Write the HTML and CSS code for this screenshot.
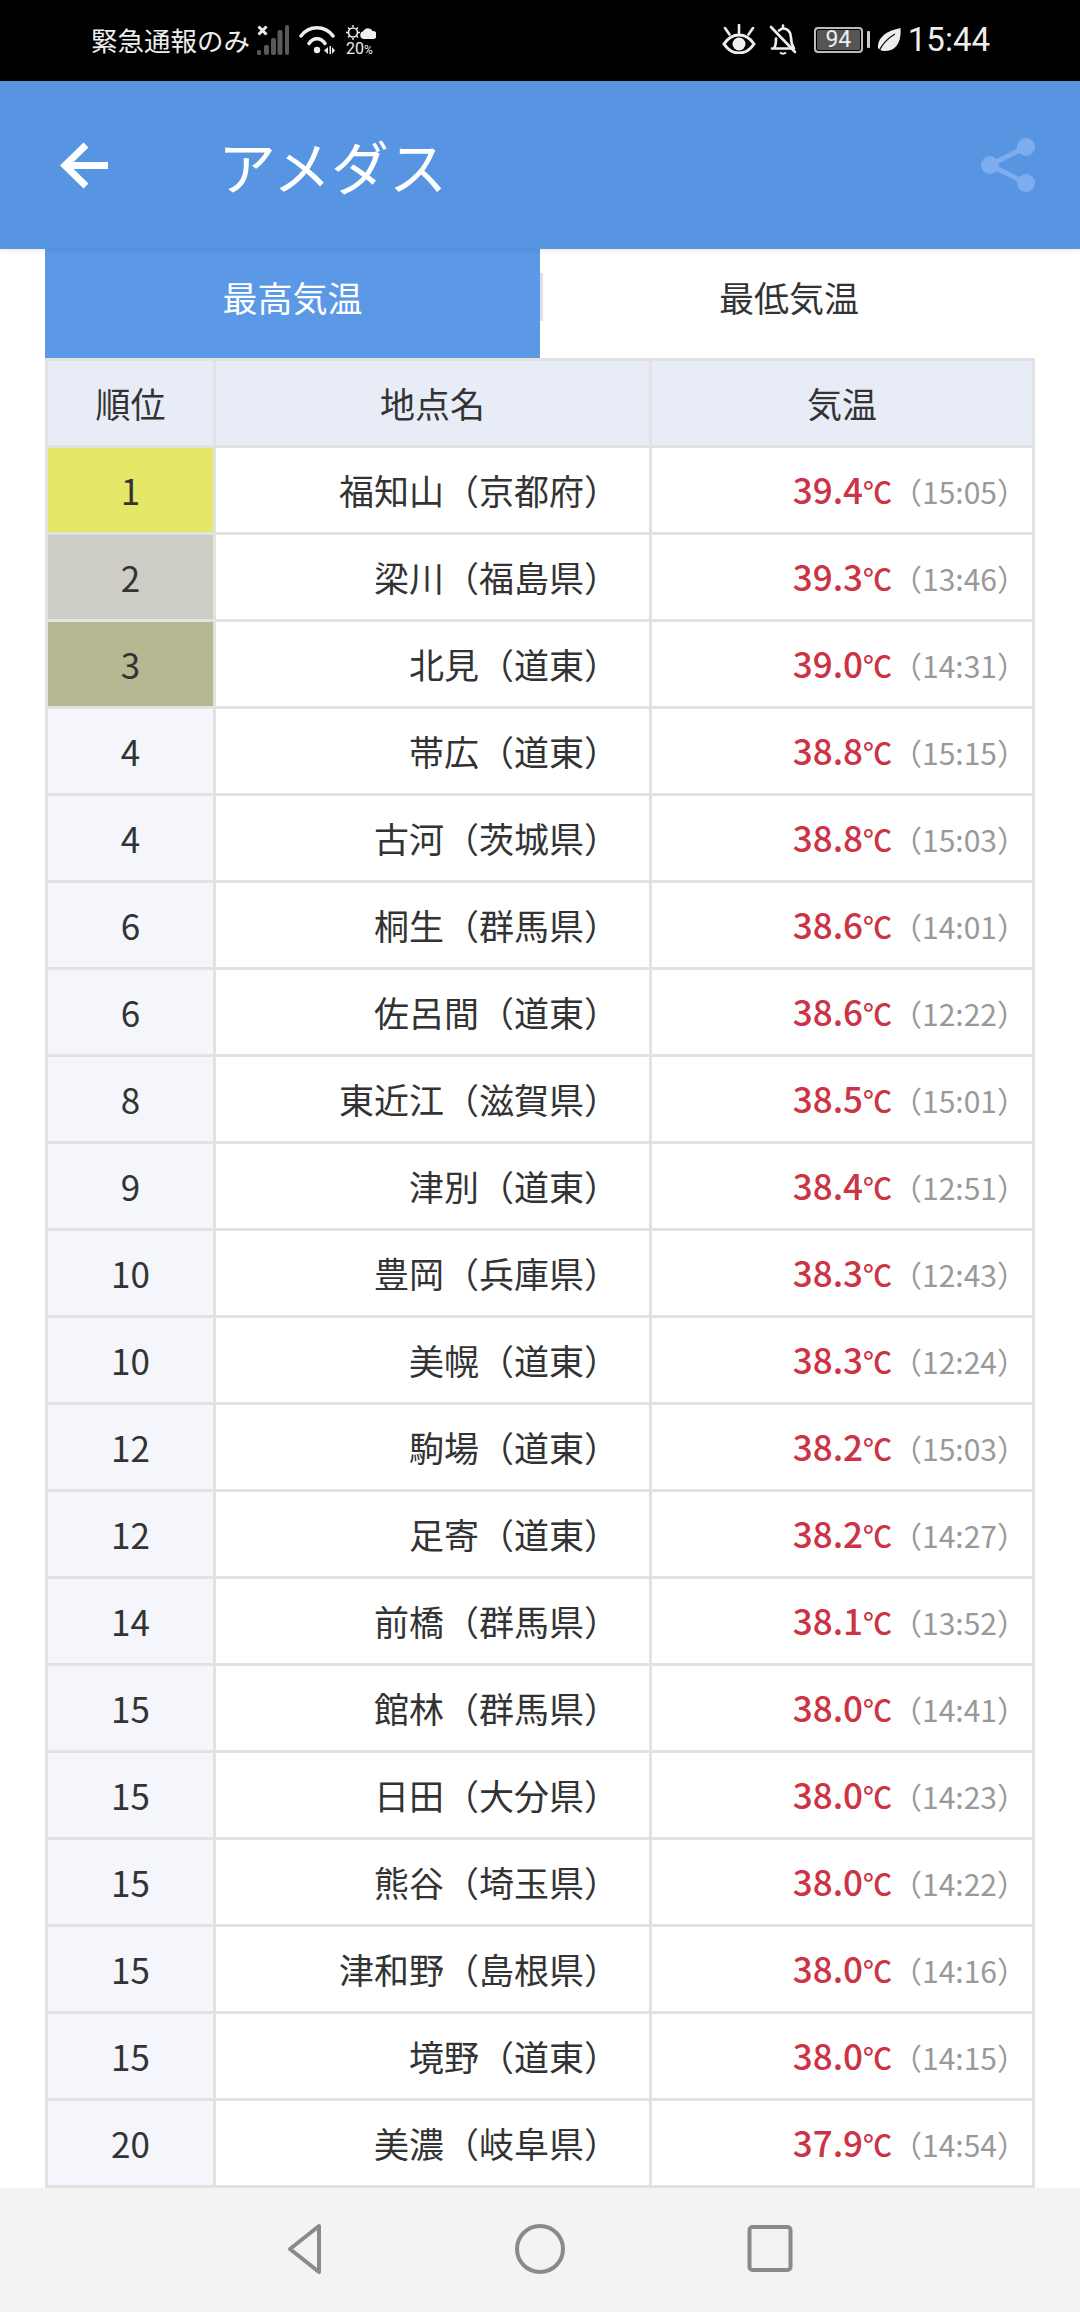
FILE: index.html
```html
<!DOCTYPE html>
<html lang="ja">
<head>
	<meta charset="utf-8">
	<title>アメダス</title>
	<link rel="stylesheet" href="styles.css">
</head>
<body>
	<div class="status_bar">
		<div class="status_left">
			<span class="carrier">緊急通報のみ</span>
			<svg class="signal" width="32" height="30" viewBox="0 0 32 30">
				<path d="M1.5 1.5l8 8M9.5 1.5l-8 8" stroke="#eee" stroke-width="3" fill="none"/>
				<g fill="#595959">
					<rect x="0" y="25" width="4" height="5" rx="1.5"/>
					<rect x="7" y="20" width="5" height="10" rx="2"/>
					<rect x="14" y="13" width="5" height="17" rx="2"/>
					<rect x="20.500" y="5" width="5" height="25" rx="2"/>
					<rect x="28" y="0" width="4" height="30" rx="2"/>
				</g>
			</svg>
			<svg class="wifi" width="36" height="31" viewBox="0 0 36 31">
				<g fill="none" stroke="#eee" stroke-linecap="round" stroke-width="3.500">
					<path d="M2 12C10 1 26 1 34 12"/>
					<path d="M10 19.500C14 13 22 13 26 19.500"/>
				</g>
				<circle cx="18" cy="26" r="3.200" fill="#eee"/>
				<path d="M29 23v7l-4-3.500zM30.500 22h1.500v8h-1.500zM33 23l3 3.500-3 3.500z" fill="#eee"/>
			</svg>
			<div class="weather">
				<svg width="30" height="16" viewBox="0 0 30 16">
					<circle cx="7" cy="7.500" r="4.500" fill="none" stroke="#eee" stroke-width="1.600"/>
					<path d="M7 0v2M7 13v2M0 7.500h2M12 7.500h2M2 2.500l1.500 1.500M10.500 11l1.500 1.500M2 12.500L3.500 11M10.500 4L12 2.500" stroke="#eee" stroke-width="1.400"/>
					<path d="M18 14a4 4 0 0 1-1-7.800A5.500 5.500 0 0 1 26.500 6a4 4 0 0 1 .5 8z" fill="#eee"/>
				</svg>
				<span class="weather_num">20<small>%</small></span>
			</div>
		</div>
		<div class="status_right">
			<svg class="eye" width="34" height="30" viewBox="0 0 34 30">
				<path d="M2 20C10 8 24 8 32 20C24 32 10 32 2 20Z" fill="none" stroke="#eee" stroke-width="3"/>
				<circle cx="17" cy="20" r="6.500" fill="#eee"/>
				<path d="M17 1v8M3 4l4.500 6.500M31 4l-4.500 6.500" stroke="#eee" stroke-width="2.600" stroke-linecap="round"/>
			</svg>
			<svg class="bell" width="28" height="31" viewBox="0 0 28 31">
				<path d="M3 24.500h22M5 24.500c2-3 2-6 2-10M10 6.500C12 5 13 4.500 14 4.500c5 0 8 4 8 9 0 4 1 8 3 11M14 4.500V1.500" fill="none" stroke="#eee" stroke-width="2.600" stroke-linecap="round"/>
				<path d="M11 28.500c2 1.600 4 1.600 6 0" fill="none" stroke="#eee" stroke-width="2"/>
				<path d="M2 3l24 25" stroke="#eee" stroke-width="2.600" stroke-linecap="round"/>
			</svg>
			<div class="battery"><span class="battery_num">94</span></div>
			<div class="battery_cap"></div>
			<svg class="leaf" width="23" height="24" viewBox="0 0 23 24">
				<path d="M22.500 0C23.500 13 19 23 6 23C3 23 1 21.500 0 20C-1 10 8 3 22.500 0Z" fill="#eee"/>
				<path d="M1 23C5 15 10 10 17 6" fill="none" stroke="#111" stroke-width="1.300"/>
			</svg>
			<span class="clock_text">15:44</span>
		</div>
	</div>

	<div class="app_bar">
		<svg class="back" width="48" height="47" viewBox="0 0 48 47">
			<path d="M48 23.500H6M26 3L5 23.500L26 44" fill="none" stroke="#fff" stroke-width="7"/>
		</svg>
		<div class="app_title">アメダス</div>
		<svg class="share" width="54" height="54" viewBox="0 0 54 54">
			<path d="M9 27L45 9M9 27L45 45" stroke="#7dadef" stroke-width="5"/>
			<circle cx="9" cy="27" r="9" fill="#7dadef"/>
			<circle cx="45" cy="9" r="9" fill="#7dadef"/>
			<circle cx="45" cy="45" r="9" fill="#7dadef"/>
		</svg>
	</div>

	<div class="content">
		<div class="tabs">
			<div class="tab tab_on">最高気温</div>
			<div class="tab_line"></div>
			<div class="tab">最低気温</div>
		</div>
		<table class="rank_table">
			<thead>
				<tr>
					<th class="col_rank">順位</th>
					<th class="col_name">地点名</th>
					<th class="col_temp">気温</th>
				</tr>
			</thead>
			<tbody>
				<tr><td class="rank gold">1</td><td class="name">福知山（京都府）</td><td class="temp"><b>39.4</b><i>℃</i><span>（15:05）</span></td></tr>
				<tr><td class="rank silver">2</td><td class="name">梁川（福島県）</td><td class="temp"><b>39.3</b><i>℃</i><span>（13:46）</span></td></tr>
				<tr><td class="rank bronze">3</td><td class="name">北見（道東）</td><td class="temp"><b>39.0</b><i>℃</i><span>（14:31）</span></td></tr>
				<tr><td class="rank">4</td><td class="name">帯広（道東）</td><td class="temp"><b>38.8</b><i>℃</i><span>（15:15）</span></td></tr>
				<tr><td class="rank">4</td><td class="name">古河（茨城県）</td><td class="temp"><b>38.8</b><i>℃</i><span>（15:03）</span></td></tr>
				<tr><td class="rank">6</td><td class="name">桐生（群馬県）</td><td class="temp"><b>38.6</b><i>℃</i><span>（14:01）</span></td></tr>
				<tr><td class="rank">6</td><td class="name">佐呂間（道東）</td><td class="temp"><b>38.6</b><i>℃</i><span>（12:22）</span></td></tr>
				<tr><td class="rank">8</td><td class="name">東近江（滋賀県）</td><td class="temp"><b>38.5</b><i>℃</i><span>（15:01）</span></td></tr>
				<tr><td class="rank">9</td><td class="name">津別（道東）</td><td class="temp"><b>38.4</b><i>℃</i><span>（12:51）</span></td></tr>
				<tr><td class="rank">10</td><td class="name">豊岡（兵庫県）</td><td class="temp"><b>38.3</b><i>℃</i><span>（12:43）</span></td></tr>
				<tr><td class="rank">10</td><td class="name">美幌（道東）</td><td class="temp"><b>38.3</b><i>℃</i><span>（12:24）</span></td></tr>
				<tr><td class="rank">12</td><td class="name">駒場（道東）</td><td class="temp"><b>38.2</b><i>℃</i><span>（15:03）</span></td></tr>
				<tr><td class="rank">12</td><td class="name">足寄（道東）</td><td class="temp"><b>38.2</b><i>℃</i><span>（14:27）</span></td></tr>
				<tr><td class="rank">14</td><td class="name">前橋（群馬県）</td><td class="temp"><b>38.1</b><i>℃</i><span>（13:52）</span></td></tr>
				<tr><td class="rank">15</td><td class="name">館林（群馬県）</td><td class="temp"><b>38.0</b><i>℃</i><span>（14:41）</span></td></tr>
				<tr><td class="rank">15</td><td class="name">日田（大分県）</td><td class="temp"><b>38.0</b><i>℃</i><span>（14:23）</span></td></tr>
				<tr><td class="rank">15</td><td class="name">熊谷（埼玉県）</td><td class="temp"><b>38.0</b><i>℃</i><span>（14:22）</span></td></tr>
				<tr><td class="rank">15</td><td class="name">津和野（島根県）</td><td class="temp"><b>38.0</b><i>℃</i><span>（14:16）</span></td></tr>
				<tr><td class="rank">15</td><td class="name">境野（道東）</td><td class="temp"><b>38.0</b><i>℃</i><span>（14:15）</span></td></tr>
				<tr><td class="rank">20</td><td class="name">美濃（岐阜県）</td><td class="temp"><b>37.9</b><i>℃</i><span>（14:54）</span></td></tr>
			</tbody>
		</table>
	</div>

	<div class="nav_bar">
		<svg width="60" height="52" viewBox="0 0 60 52">
			<path d="M40 3L11 26L40 49Z" transform="translate(0 0)" fill="none" stroke="#8a8a8a" stroke-width="4" stroke-linejoin="round"/>
		</svg>
		<svg width="60" height="52" viewBox="0 0 60 52">
			<circle cx="30" cy="26" r="23" fill="none" stroke="#8a8a8a" stroke-width="4"/>
		</svg>
		<svg width="60" height="52" viewBox="0 0 60 52">
			<rect x="8.500" y="4" width="41" height="43" rx="3" fill="none" stroke="#8a8a8a" stroke-width="4"/>
		</svg>
	</div>
</body>
</html>
```

FILE: styles.css
```css
html, body {
	margin: 0;
	padding: 0;
}
body {
	width: 1080px;
	height: 2312px;
	overflow: hidden;
	display: flex;
	flex-direction: column;
	background-color: #fff;
	color: #333;
	font-family: "Noto Sans CJK JP", "Noto Sans", sans-serif;
}

/* status bar */
.status_bar {
	flex: none;
	height: 81px;
	box-sizing: border-box;
	padding: 0 90px 2px 91px;
	background-color: #000;
	color: #eee;
	display: flex;
	justify-content: space-between;
	align-items: center;
}
.status_left, .status_right {
	display: flex;
	align-items: center;
}
.carrier {
	font-size: 26.500px;
	line-height: 30px;
}
.signal {
	margin-left: 7px;
}
.wifi {
	margin-left: 10px;
}
.weather {
	margin-left: 11px;
	width: 30px;
	display: flex;
	flex-direction: column;
	margin-top: 3px;
}
.weather svg {
	display: block;
}
.weather_num {
	font-family: Roboto, sans-serif;
	font-size: 16px;
	line-height: 16px;
	white-space: nowrap;
}
.weather_num small {
	font-size: 12px;
}
.eye {
	margin-bottom: 1px;
}
.bell {
	margin-left: 13px;
}
.battery {
	margin-left: 17px;
	width: 49px;
	height: 26px;
	box-sizing: border-box;
	border: 2px solid #bbb;
	border-radius: 4px;
	background-color: #555;
	box-shadow: inset 0 0 0 1px #000;
	display: flex;
	justify-content: center;
	align-items: center;
}
.battery_num {
	font-family: Roboto, sans-serif;
	font-size: 23px;
	line-height: 22px;
	color: #eee;
}
.battery_cap {
	margin-left: 4px;
	width: 3px;
	height: 17px;
	background-color: #ccc;
	border-radius: 1px;
}
.leaf {
	margin-left: 8px;
}
.clock_text {
	margin-left: 7px;
	font-family: Roboto, sans-serif;
	font-size: 33px;
	line-height: 36px;
}

/* app bar */
.app_bar {
	flex: none;
	height: 168px;
	box-sizing: border-box;
	padding: 0 45px 0 60px;
	background-color: #5795e3;
	display: flex;
	align-items: center;
	position: relative;
	z-index: 1;
	box-shadow: 0 2px 5px rgba(0, 0, 0, 0.08);
}
.app_title {
	margin-left: 110px;
	font-size: 58px;
	line-height: 80px;
	color: #fff;
}
.share {
	margin-left: auto;
}

/* tabs */
.content {
	flex: 1;
	min-height: 0;
	padding: 0 45px;
}
.tabs {
	height: 109px;
	display: flex;
}
.tab {
	flex: 1;
	box-sizing: border-box;
	padding-bottom: 14px;
	font-size: 35px;
	display: flex;
	justify-content: center;
	align-items: center;
}
.tab_on {
	flex: none;
	width: 495px;
	background-color: #5b98e6;
	color: #fff;
}
.tab_line {
	flex: none;
	width: 3px;
	height: 48px;
	margin-top: 24px;
	background-color: #dfe0e4;
}

/* table */
.rank_table {
	width: 990px;
	table-layout: fixed;
	border-collapse: separate;
	border-spacing: 0;
	border-top: 3px solid #e2e2e2;
	border-left: 3px solid #e2e2e2;
}
.rank_table th, .rank_table td {
	height: 87px;
	box-sizing: border-box;
	padding: 0;
	border-right: 3px solid #e2e2e2;
	border-bottom: 3px solid #e2e2e2;
	font-size: 35px;
	font-weight: 400;
	line-height: 44px;
	white-space: nowrap;
}
.rank_table th {
	background-color: #e8ecf6;
}
.col_rank {
	width: 168px;
}
.col_name {
	width: 436px;
}
.col_temp {
	width: 383px;
}
.rank_table .rank {
	text-align: center;
	background-color: #f4f6fb;
}
.rank_table .gold {
	background-color: #e6e769;
}
.rank_table .silver {
	background-color: #cdcdc5;
}
.rank_table .bronze {
	background-color: #b6b892;
}
.rank_table .name {
	text-align: right;
	padding-right: 30px;
}
.rank_table .temp {
	text-align: right;
	padding-right: 5px;
	color: #cc3344;
}
.temp b {
	font-weight: 500;
}
.temp i {
	font-style: normal;
	font-size: 29px;
	font-weight: 500;
}
.temp span {
	font-size: 30px;
	color: #999;
}

/* nav bar */
.nav_bar {
	flex: none;
	height: 124px;
	padding-bottom: 2px;
	box-sizing: border-box;
	background-color: #f3f3f3;
	display: flex;
	justify-content: center;
	align-items: center;
	gap: 171px;
}
```
